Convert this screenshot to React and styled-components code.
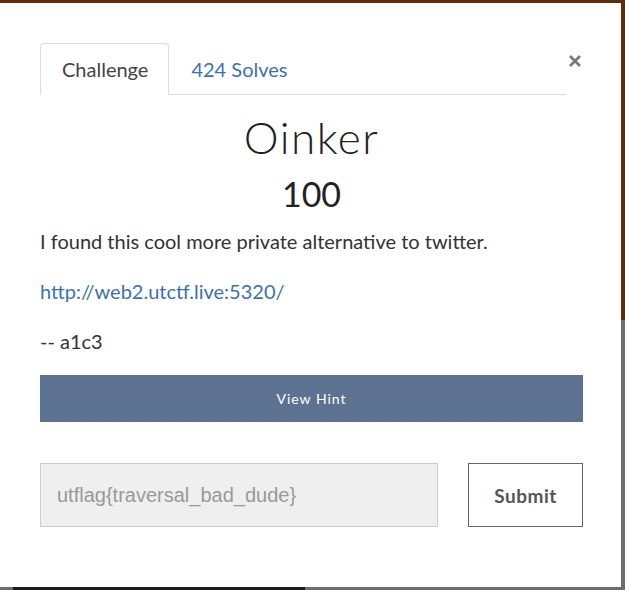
import React, { useState } from "react";
import styled, { createGlobalStyle } from "styled-components";

const GlobalStyle = createGlobalStyle`
  html, body {
    margin: 0;
    padding: 0;
  }
  body {
    font-family: Lato, "Open Sans", sans-serif;
    background: #5b2e0c;
  }
`;

const Page = styled.div`
  width: 625px;
  height: 590px;
  display: flex;
  flex-direction: column;
  background: linear-gradient(to bottom, #5b2e0c 0, #5b2e0c 320px, #6e6e6e 320px);
  overflow: hidden;
`;

const Modal = styled.div`
  margin-top: 3px;
  width: 621px;
  height: 584px;
  background: #fff;
  box-sizing: border-box;
  padding: 40px 38px 0 40px;
  display: flex;
  flex-direction: column;
`;

const BottomStrip = styled.div`
  flex: 1;
  display: flex;
  padding-left: 13px;
  div {
    width: 292px;
    background: #1c1c1c;
  }
`;

const TopRow = styled.div`
  width: 543px;
  display: flex;
  align-items: flex-start;
`;

const Tabs = styled.div`
  display: flex;
  width: 526px;
  flex-shrink: 0;
  border-bottom: 1px solid #ddd;
`;

const Tab = styled.div`
  height: 52px;
  padding: 0 20px 0 21px;
  box-sizing: border-box;
  display: flex;
  align-items: center;
  font-size: 20px;
  margin-bottom: -1px;
  color: ${(p) => (p.active ? "#444" : "#3c72ab")};
  background: ${(p) => (p.active ? "#fff" : "transparent")};
  border: 1px solid ${(p) => (p.active ? "#ddd" : "transparent")};
  border-bottom-color: ${(p) => (p.active ? "#fff" : "transparent")};
  border-radius: 4px 4px 0 0;
  cursor: pointer;
`;

const Close = styled.button`
  margin-left: auto;
  margin-top: 8px;
  border: none;
  background: none;
  padding: 0;
  width: 17px;
  height: 20px;
  display: flex;
  align-items: center;
  justify-content: center;
  cursor: pointer;
`;

const Body = styled.div`
  width: 543px;
  display: flex;
  flex-direction: column;
`;

const Title = styled.h1`
  margin: 18px 0 0;
  text-align: center;
  font-family: Lato, sans-serif;
  font-weight: 300;
  font-size: 44px;
  line-height: 48px;
  letter-spacing: 1.5px;
  color: #222;
`;

const Points = styled.h2`
  margin: 13px 0 0;
  text-align: center;
  font-weight: 400;
  font-size: 34px;
  line-height: 40px;
  color: #222;
`;

const Para = styled.p`
  margin: ${(p) => (p.first ? "2px" : "0")} 0 0;
  font-size: 20px;
  line-height: 50px;
  color: #333;
  a {
    color: #3c72ab;
    text-decoration: none;
  }
`;

const HintButton = styled.button`
  margin-top: 9px;
  width: 100%;
  height: 47px;
  border: none;
  background: #5d7290;
  color: #fff;
  font-family: Lato, sans-serif;
  font-size: 14px;
  letter-spacing: 1px;
  cursor: pointer;
`;

const SubmitRow = styled.div`
  margin-top: 41px;
  display: flex;
  justify-content: space-between;
`;

const FlagInput = styled.input`
  width: 398px;
  height: 64px;
  box-sizing: border-box;
  border: 1px solid #ccc;
  background: #efefef;
  padding: 0 16px;
  font-family: "Liberation Sans", Arial, sans-serif;
  font-size: 20px;
  color: #999;
  &::placeholder {
    color: #999;
  }
`;

const SubmitButton = styled.button`
  width: 115px;
  height: 64px;
  box-sizing: border-box;
  border: 1px solid #666;
  background: #fff;
  color: #555;
  font-family: Lato, sans-serif;
  font-weight: 700;
  font-size: 19px;
  letter-spacing: 0.5px;
  cursor: pointer;
`;

export default function App() {
  const [tab, setTab] = useState("challenge");

  return (
    <Page>
      <GlobalStyle />
      <Modal>
        <TopRow>
          <Tabs>
            <Tab active={tab === "challenge"} onClick={() => setTab("challenge")}>
              Challenge
            </Tab>
            <Tab active={tab === "solves"} onClick={() => setTab("solves")}>
              424 Solves
            </Tab>
          </Tabs>
          <Close aria-label="Close">
            <svg width="14" height="14" viewBox="0 0 14 14">
              <path d="M2 2 L12 12 M12 2 L2 12" stroke="#777" strokeWidth="2.6" strokeLinecap="butt" />
            </svg>
          </Close>
        </TopRow>
        <Body>
          <Title>Oinker</Title>
          <Points>100</Points>
          <Para first>I found this cool more private alternative to twitter.</Para>
          <Para>
            <a href="#">http://web2.utctf.live:5320/</a>
          </Para>
          <Para>-- a1c3</Para>
          <HintButton>View Hint</HintButton>
          <SubmitRow>
            <FlagInput placeholder="utflag{traversal_bad_dude}" />
            <SubmitButton>Submit</SubmitButton>
          </SubmitRow>
        </Body>
      </Modal>
      <BottomStrip>
        <div />
      </BottomStrip>
    </Page>
  );
}
